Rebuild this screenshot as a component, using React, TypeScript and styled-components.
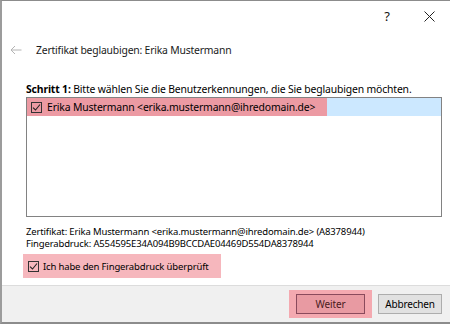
import React, { useState } from 'react';
import styled, { createGlobalStyle } from 'styled-components';

const GlobalStyle = createGlobalStyle`
  html, body {
    margin: 0;
    padding: 0;
    background: #ffffff;
  }
  body {
    font-family: "Noto Sans", "DejaVu Sans", sans-serif;
    color: #000;
  }
`;

const Window = styled.div`
  width: 450px;
  height: 324px;
  box-sizing: border-box;
  border-top: 1px solid #8c8c8c;
  border-left: 2px solid #9c9c9c;
  border-bottom: 2px solid #8c8c8c;
  display: flex;
  flex-direction: column;
  background: #fff;
  overflow: hidden;
`;

const TitleBar = styled.div`
  height: 30px;
  display: flex;
  justify-content: flex-end;
  align-items: center;
  padding-right: 0;
`;

const CaptionButton = styled.button`
  width: 42px;
  height: 28px;
  border: none;
  background: transparent;
  display: flex;
  align-items: center;
  justify-content: center;
  padding: 0;
  font-family: "Noto Sans", sans-serif;
  font-size: 13px;
  color: #111;
`;

const Header = styled.div`
  display: flex;
  align-items: center;
  height: 38px;
  padding-left: 8px;
  gap: 14px;
`;

const BackButton = styled.span`
  display: flex;
  align-items: center;
`;

const Title = styled.div`
  font-size: 10.4px;
  color: #1a1a1a;
  letter-spacing: -0.2px;
`;

const Content = styled.div`
  flex: 1;
  padding: 13px 8px 0 24px;
  font-size: 10.4px;
  letter-spacing: -0.15px;
`;

const StepLine = styled.div`
  line-height: 14px;
  margin-bottom: 1px;
`;

const ListBox = styled.div`
  height: 120px;
  border: 1px solid #828282;
  box-sizing: border-box;
  background: #fff;
`;

const ListRow = styled.div<{ selected?: boolean }>`
  height: 18px;
  display: flex;
  background: ${({ selected }) => (selected ? '#cce8ff' : 'transparent')};
`;

const Highlight = styled.div`
  display: flex;
  align-items: center;
  gap: 5px;
  background: #ec9aa3;
  padding: 0 12px 0 4px;
`;

const Box = styled.span`
  width: 11px;
  height: 11px;
  box-sizing: border-box;
  border: 1px solid #333;
  display: flex;
  align-items: center;
  justify-content: center;
  background: transparent;
  flex-shrink: 0;
`;

const Info = styled.div`
  margin-top: 9px;
  font-size: 9.5px;
  line-height: 12px;
  letter-spacing: -0.15px;
`;

const ConfirmRow = styled.div`
  margin-top: 4px;
  margin-left: -3px;
  display: inline-flex;
  align-items: center;
  gap: 4px;
  height: 24px;
  padding: 0 12px 0 5px;
  background: #f6b7bd;
  font-size: 9.5px;
  letter-spacing: -0.15px;
  cursor: default;
`;

const Footer = styled.div`
  height: 36px;
  border-top: 1px solid #dcdcdc;
  background: #f0f0f0;
  display: flex;
  justify-content: flex-end;
  align-items: center;
  padding-right: 8px;
  gap: 6px;
`;

const ButtonHalo = styled.div`
  padding: 4px 7px;
  background: #f4a9b0;
  display: flex;
`;

const Button = styled.button<{ primary?: boolean }>`
  height: 20px;
  width: ${({ primary }) => (primary ? '69px' : '64px')};
  box-sizing: border-box;
  border: 1px solid ${({ primary }) => (primary ? '#8a4a5c' : '#adadad')};
  background: ${({ primary }) => (primary ? '#e89aa2' : '#e1e1e1')};
  font-family: "Noto Sans", sans-serif;
  font-size: 10px;
  letter-spacing: -0.15px;
  color: ${({ primary }) => (primary ? '#4a1a20' : '#000')};
  padding: 0;
`;

const Check = () => (
  <svg width="9" height="9" viewBox="0 0 9 9">
    <path d="M1 4.6 L3.5 7 L8 1.5" fill="none" stroke="#222" strokeWidth="1.1" />
  </svg>
);

export default function App() {
  const [checked, setChecked] = useState(true);
  return (
    <>
      <GlobalStyle />
      <Window>
        <TitleBar>
          <CaptionButton>?</CaptionButton>
          <CaptionButton>
            <svg width="11" height="11" viewBox="0 0 11 11">
              <path d="M0.5 0.5 L10.5 10.5 M10.5 0.5 L0.5 10.5" stroke="#222" strokeWidth="1" />
            </svg>
          </CaptionButton>
        </TitleBar>
        <Header>
          <BackButton>
            <svg width="12" height="10" viewBox="0 0 12 10">
              <path d="M11.5 5 H1 M5 1 L1 5 L5 9" fill="none" stroke="#b4b4b4" strokeWidth="1" />
            </svg>
          </BackButton>
          <Title>Zertifikat beglaubigen: Erika Mustermann</Title>
        </Header>
        <Content>
          <StepLine>
            <b>Schritt 1:</b> Bitte wählen Sie die Benutzerkennungen, die Sie beglaubigen möchten.
          </StepLine>
          <ListBox>
            <ListRow selected>
              <Highlight>
                <Box>
                  <Check />
                </Box>
                Erika Mustermann &lt;erika.mustermann@ihredomain.de&gt;
              </Highlight>
            </ListRow>
          </ListBox>
          <Info>
            Zertifikat: Erika Mustermann &lt;erika.mustermann@ihredomain.de&gt; (A8378944)
            <br />
            Fingerabdruck: A554595E34A094B9BCCDAE04469D554DA8378944
          </Info>
          <ConfirmRow onClick={() => setChecked(!checked)}>
            <Box>{checked && <Check />}</Box>
            Ich habe den Fingerabdruck überprüft
          </ConfirmRow>
        </Content>
        <Footer>
          <ButtonHalo>
            <Button primary>Weiter</Button>
          </ButtonHalo>
          <Button>Abbrechen</Button>
        </Footer>
      </Window>
    </>
  );
}
